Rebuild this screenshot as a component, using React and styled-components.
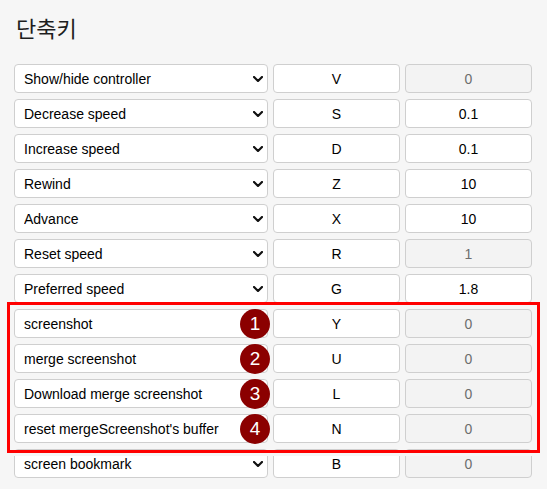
import React from "react";
import styled, { createGlobalStyle } from "styled-components";

const Global = createGlobalStyle`
  html, body { margin: 0; padding: 0; background: #f6f6f6; }
  body { font-family: "Liberation Sans", Arial, sans-serif; }
`;

const Page = styled.div`
  padding: 16px 16px 0 14px;
  width: 547px;
  box-sizing: border-box;
`;

const Title = styled.h1`
  margin: 0 0 0 2px;
  font-family: "Noto Sans CJK KR", "Liberation Sans", sans-serif;
  font-size: 22px;
  font-weight: 400;
  line-height: 22px;
  color: #1e1e1e;
`;

const List = styled.div`
  margin-top: 26px;
  display: flex;
  flex-direction: column;
  gap: 6px;
`;

const Group = styled.div`
  position: relative;
  display: flex;
  flex-direction: column;
  gap: 6px;
`;

const Frame = styled.div`
  position: absolute;
  z-index: 2;
  top: -7px;
  left: -7px;
  right: -9px;
  bottom: -10px;
  border: 3px solid #ff0000;
  box-shadow: 0 3px 0 0 #f6f6f6;
  pointer-events: none;
`;

const Row = styled.div`
  display: grid;
  grid-template-columns: 254px 127px 127px;
  column-gap: 5px;
  height: 29px;
`;

const Cell = styled.div`
  position: relative;
  display: flex;
`;

const fieldBase = `
  box-sizing: border-box;
  width: 100%;
  height: 29px;
  margin: 0;
  border: 1px solid #cfcfcf;
  border-radius: 4px;
  font-family: "Liberation Sans", Arial, sans-serif;
  font-size: 14px;
  color: #000;
  outline: none;
`;

const Select = styled.select`
  ${fieldBase}
  appearance: none;
  -webkit-appearance: none;
  background: #fff;
  padding: 0 24px 0 9px;
`;

const Chevron = styled.svg`
  position: absolute;
  right: 5px;
  top: 12px;
  width: 10px;
  height: 6px;
  pointer-events: none;
`;

const NameInput = styled.input`
  ${fieldBase}
  background: #fff;
  padding: 0 9px;
`;

const KeyInput = styled.input`
  ${fieldBase}
  background: #fff;
  text-align: center;
  padding: 0 4px;
`;

const ValueInput = styled.input`
  ${fieldBase}
  text-align: center;
  padding: 0 4px;
  background: ${(p) => (p.disabled ? "#f3f3f3" : "#fff")};
  color: ${(p) => (p.disabled ? "#6d6d6d" : "#000")};
  -webkit-text-fill-color: ${(p) => (p.disabled ? "#6d6d6d" : "#000")};
  opacity: 1;
`;

const Badge = styled.span`
  position: absolute;
  right: -2px;
  top: 50%;
  transform: translateY(-50%);
  width: 30px;
  height: 30px;
  border-radius: 50%;
  background: #8b0000;
  color: #fff;
  font-family: "Liberation Sans", Arial, sans-serif;
  font-size: 19px;
  line-height: 30px;
  text-align: center;
`;

const selectRows = [
  { label: "Show/hide controller", key: "V", value: "0", disabled: true },
  { label: "Decrease speed", key: "S", value: "0.1" },
  { label: "Increase speed", key: "D", value: "0.1" },
  { label: "Rewind", key: "Z", value: "10" },
  { label: "Advance", key: "X", value: "10" },
  { label: "Reset speed", key: "R", value: "1", disabled: true },
  { label: "Preferred speed", key: "G", value: "1.8" },
];

const customRows = [
  { label: "screenshot", key: "Y", value: "0" },
  { label: "merge screenshot", key: "U", value: "0" },
  { label: "Download merge screenshot", key: "L", value: "0" },
  { label: "reset mergeScreenshot's buffer", key: "N", value: "0" },
];

function SelectCell({ label }) {
  return (
    <Cell>
      <Select defaultValue={label}>
        <option value={label}>{label}</option>
      </Select>
      <Chevron viewBox="0 0 10 6">
        <polyline
          points="1,1 5,5 9,1"
          fill="none"
          stroke="#111"
          strokeWidth="2.2"
          strokeLinecap="round"
          strokeLinejoin="round"
        />
      </Chevron>
    </Cell>
  );
}

function Tail({ k, value, disabled }) {
  return (
    <>
      <Cell>
        <KeyInput type="text" defaultValue={k} />
      </Cell>
      <Cell>
        <ValueInput type="text" defaultValue={value} disabled={disabled} />
      </Cell>
    </>
  );
}

export default function App() {
  return (
    <>
      <Global />
      <Page>
        <Title>단축키</Title>
        <List>
          {selectRows.map((r) => (
            <Row key={r.key}>
              <SelectCell label={r.label} />
              <Tail k={r.key} value={r.value} disabled={r.disabled} />
            </Row>
          ))}
          <Group>
            <Frame />
            {customRows.map((r, i) => (
              <Row key={r.key}>
                <Cell>
                  <NameInput type="text" defaultValue={r.label} />
                  <Badge>{i + 1}</Badge>
                </Cell>
                <Tail k={r.key} value={r.value} disabled />
              </Row>
            ))}
          </Group>
          <Row>
            <SelectCell label="screen bookmark" />
            <Tail k="B" value="0" disabled />
          </Row>
        </List>
      </Page>
    </>
  );
}
